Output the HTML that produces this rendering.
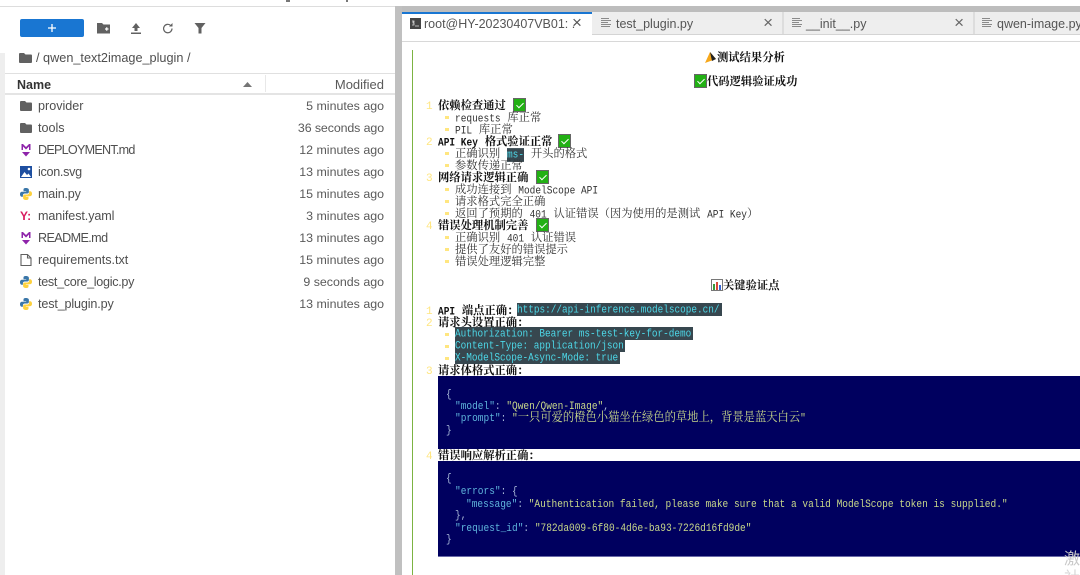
<!DOCTYPE html>
<html><head><meta charset="utf-8">
<style>
html,body{margin:0;padding:0;background:#fff}
#p{position:relative;width:1080px;height:575px;overflow:hidden;background:#fff;font-family:"Liberation Sans","Noto Sans CJK SC",sans-serif;filter:blur(.3px)}
.a{position:absolute}
.f{position:absolute;font-size:12.6px;line-height:22px;height:22px;color:#4f4f4f;white-space:nowrap}
.m{position:absolute;right:696px;font-size:12.4px;line-height:22px;height:22px;color:#5a5a5a;white-space:nowrap}
.ic{position:absolute;left:19px;width:14px;height:14px}
.tab{position:absolute;top:12px;height:22px;background:#eee;border-right:2px solid #ddd;box-sizing:border-box;font-size:12.5px;line-height:20px;color:#555}
.tab span{position:absolute;top:2px;left:31px;white-space:nowrap}
.tab b{position:absolute;right:9px;top:1px;font-weight:normal;font-size:17px;color:#666}
.l{position:absolute;margin-top:4px;height:12px;line-height:12px;font-size:11.3px;white-space:nowrap;font-family:"Liberation Mono","Noto Serif CJK SC",monospace;color:#333}
.l i{font-style:normal;font-size:9.5px;display:inline-block;transform:scaleY(1.15)}
.bd{font-weight:bold;color:#111}
.n{position:absolute;margin-top:4px;left:426px;height:12px;line-height:12px;font-size:11px;color:#ffe680;font-family:"Liberation Mono",monospace}
.d{position:absolute;left:445px;width:4px;height:3px;background:#ffe680}
.hl{background:#37474f;color:#4dd8e8;font-family:"Liberation Mono","Noto Serif CJK SC",monospace}
.hl em{font-style:normal;display:inline-block;transform:scaleY(1.15)}
.c{position:absolute;margin-top:1px;left:446px;height:12px;line-height:12px;font-size:9.5px;white-space:pre;font-family:"Liberation Mono","Noto Serif CJK SC",monospace;color:#a8b8d8;transform:scaleY(1.12)}
.c u{text-decoration:none;color:#5fb4dc}
.c s{text-decoration:none;color:#c8d88a}
.ck{position:absolute;width:13px;height:14px;background:#22b014;border:1px solid #666;box-sizing:border-box}
.ck:after{content:"";position:absolute;left:4px;top:2px;width:3px;height:6px;border:solid #fff;border-width:0 1.5px 1.5px 0;transform:rotate(45deg)}
</style></head><body><div id="p">

<div class="a" style="left:286px;top:0;width:4px;height:2px;background:#777"></div>
<div class="a" style="left:346px;top:0;width:2px;height:2px;background:#777"></div>
<div class="a" style="left:0;top:6px;width:395px;height:1px;background:#ddd"></div>
<div class="a" style="left:0;top:53px;width:5px;height:522px;background:#eee"></div>
<div class="a" style="left:395px;top:6px;width:7px;height:569px;background:#c0c0c0"></div>
<div class="a" style="left:402px;top:6px;width:678px;height:6px;background:#bdbdbd"></div>

<div class="a" style="left:20px;top:19px;width:64px;height:18px;background:#1976d2;border-radius:2px"></div>
<svg class="a" style="left:47px;top:23px" width="10" height="10" viewBox="0 0 10 10"><path d="M5 1v8M1 5h8" stroke="#fff" stroke-width="1.300"/></svg>
<svg class="a" style="left:97px;top:22px" width="14" height="13" viewBox="0 0 14 13"><path d="M0 1h5l1.500 1.500H13v9H0z" fill="#616161"/><path d="M8 7h3.500M9.750 5.250v3.500" stroke="#fff" stroke-width="1.200"/></svg>
<svg class="a" style="left:130px;top:22px" width="12" height="13" viewBox="0 0 12 13"><path d="M6 1l4 5H7.500v3h-3V6H2zM1 10.500h10V12H1z" fill="#616161"/></svg>
<svg class="a" style="left:162px;top:22px" width="12" height="13" viewBox="0 0 12 13"><path d="M10 6.500a4.200 4.200 0 1 1-1.300-3" fill="none" stroke="#616161" stroke-width="1.200"/><path d="M10.500 1v3.500H7z" fill="#616161"/></svg>
<svg class="a" style="left:194px;top:22px" width="12" height="12" viewBox="0 0 12 12"><path d="M.5 1h11L7.500 6v5.500h-3V6z" fill="#616161"/></svg>

<svg class="a" style="left:19px;top:52px" width="13" height="12" viewBox="0 0 13 12"><path d="M0 2a1 1 0 0 1 1-1h4l1.500 1.500H12a1 1 0 0 1 1 1V10a1 1 0 0 1-1 1H1a1 1 0 0 1-1-1z" fill="#616161"/></svg>
<div class="a" style="left:36px;top:48px;font-size:12.7px;line-height:20px;color:#4f4f4f;white-space:nowrap">/ qwen_text2image_plugin /</div>
<div class="a" style="left:5px;top:73px;width:390px;height:1px;background:#e0e0e0"></div>
<div class="a" style="left:17px;top:76px;font-size:12.500px;line-height:18px;font-weight:bold;color:#333">Name</div>
<svg class="a" style="left:243px;top:82px" width="9" height="5" viewBox="0 0 9 5"><path d="M0 5L4.500 0 9 5z" fill="#757575"/></svg>
<div class="a" style="left:265px;top:75px;width:1px;height:17px;background:#e8e8e8"></div>
<div class="a" style="right:696px;top:76px;font-size:13px;line-height:18px;color:#5a5a5a">Modified</div>
<div class="a" style="left:5px;top:93px;width:390px;height:2px;background:#e4e4e4"></div>

<svg class="ic" style="top:99px" viewBox="0 0 14 14"><path d="M1 3a1 1 0 0 1 1-1h4l1.500 1.500H12a1 1 0 0 1 1 1V11a1 1 0 0 1-1 1H2a1 1 0 0 1-1-1z" fill="#616161"/></svg>
<div class="f" style="left:38px;top:95px">provider</div><div class="m" style="top:95px">5 minutes ago</div>
<svg class="ic" style="top:121px" viewBox="0 0 14 14"><path d="M1 3a1 1 0 0 1 1-1h4l1.500 1.500H12a1 1 0 0 1 1 1V11a1 1 0 0 1-1 1H2a1 1 0 0 1-1-1z" fill="#616161"/></svg>
<div class="f" style="left:38px;top:117px">tools</div><div class="m" style="top:117px;letter-spacing:-.1px">36 seconds ago</div>
<svg class="ic" style="top:143px" viewBox="0 0 14 14"><path d="M2.500 7V1h1.500L7 4l3-3h1.500v6H10V3.500L7 6.500 4 3.500V7zM3 9h8l-4 4.500z" fill="#8e24aa"/></svg>
<div class="f" style="left:38px;top:139px;letter-spacing:-.75px">DEPLOYMENT.md</div><div class="m" style="top:139px">12 minutes ago</div>
<svg class="ic" style="top:165px" viewBox="0 0 14 14"><rect x="1" y="1" width="12" height="12" fill="#1e4fa0"/><path d="M2 12l3.500-5 2.500 3 1.500-1.500L12 12z" fill="#fff"/><circle cx="10" cy="4" r="1.300" fill="#fff"/></svg>
<div class="f" style="left:38px;top:161px;letter-spacing:-.3px">icon.svg</div><div class="m" style="top:161px">13 minutes ago</div>
<svg class="ic" style="top:187px" viewBox="0 0 14 14"><path d="M7 1C4.500 1 4.500 2 4.500 3v1.200H7.200v.6H3C1.500 4.800 1 6 1 7.200s.6 2.500 1.800 2.500h1.100V8.300c0-1 .9-1.800 1.900-1.800h2.600c.8 0 1.500-.7 1.500-1.500V3C9.900 1.800 8.800 1 7 1z" fill="#3a76a8"/><path d="M7 13c2.500 0 2.500-1 2.500-2V9.800H6.800v-.6H11c1.500 0 2-1.200 2-2.400s-.6-2.500-1.800-2.500h-1.100v1.400c0 1-.9 1.800-1.900 1.800H5.600c-.8 0-1.500.7-1.500 1.500V11c0 1.200 1.100 2 2.900 2z" fill="#fdd13e"/></svg>
<div class="f" style="left:38px;top:183px;letter-spacing:-.2px">main.py</div><div class="m" style="top:183px">15 minutes ago</div>
<div class="a" style="left:20px;top:206px;font-size:12px;line-height:20px;font-weight:bold;color:#d81b60">Y:</div>
<div class="f" style="left:38px;top:205px;letter-spacing:-.1px">manifest.yaml</div><div class="m" style="top:205px">3 minutes ago</div>
<svg class="ic" style="top:231px" viewBox="0 0 14 14"><path d="M2.500 7V1h1.500L7 4l3-3h1.500v6H10V3.500L7 6.500 4 3.500V7zM3 9h8l-4 4.500z" fill="#8e24aa"/></svg>
<div class="f" style="left:38px;top:227px;letter-spacing:-.6px">README.md</div><div class="m" style="top:227px">13 minutes ago</div>
<svg class="ic" style="top:253px" viewBox="0 0 14 14"><path d="M2 1.500h6.500L12 5v7.500H2zM8.500 1.500V5H12" fill="none" stroke="#616161" stroke-width="1.100"/></svg>
<div class="f" style="left:38px;top:249px">requirements.txt</div><div class="m" style="top:249px">15 minutes ago</div>
<svg class="ic" style="top:275px" viewBox="0 0 14 14"><path d="M7 1C4.500 1 4.500 2 4.500 3v1.200H7.200v.6H3C1.500 4.800 1 6 1 7.200s.6 2.500 1.800 2.500h1.100V8.300c0-1 .9-1.800 1.900-1.800h2.600c.8 0 1.500-.7 1.500-1.500V3C9.900 1.800 8.800 1 7 1z" fill="#3a76a8"/><path d="M7 13c2.500 0 2.500-1 2.500-2V9.800H6.800v-.6H11c1.500 0 2-1.200 2-2.400s-.6-2.500-1.800-2.500h-1.100v1.400c0 1-.9 1.800-1.900 1.800H5.600c-.8 0-1.500.7-1.500 1.500V11c0 1.200 1.100 2 2.900 2z" fill="#fdd13e"/></svg>
<div class="f" style="left:38px;top:271px;letter-spacing:-.3px">test_core_logic.py</div><div class="m" style="top:271px">9 seconds ago</div>
<svg class="ic" style="top:297px" viewBox="0 0 14 14"><path d="M7 1C4.500 1 4.500 2 4.500 3v1.200H7.200v.6H3C1.500 4.800 1 6 1 7.200s.6 2.500 1.800 2.500h1.100V8.300c0-1 .9-1.800 1.900-1.800h2.600c.8 0 1.500-.7 1.500-1.500V3C9.900 1.800 8.800 1 7 1z" fill="#3a76a8"/><path d="M7 13c2.500 0 2.500-1 2.500-2V9.800H6.800v-.6H11c1.500 0 2-1.200 2-2.400s-.6-2.500-1.800-2.500h-1.100v1.400c0 1-.9 1.800-1.900 1.800H5.600c-.8 0-1.500.7-1.500 1.500V11c0 1.200 1.100 2 2.900 2z" fill="#fdd13e"/></svg>
<div class="f" style="left:38px;top:293px;letter-spacing:-.15px">test_plugin.py</div><div class="m" style="top:293px">13 minutes ago</div>

<!-- tabs -->
<div class="a" style="left:402px;top:12px;width:190px;height:2px;background:#1976d2"></div>
<div class="a" style="left:402px;top:14px;width:190px;height:27px;background:#fff;font-size:12.5px;line-height:20px;color:#555"><span class="a" style="left:22px;top:0;white-space:nowrap">root@HY-20230407VB01: .</span><b class="a" style="left:170px;top:-1px;font-weight:normal;font-size:17px;color:#555">×</b></div>
<svg class="a" style="left:410px;top:18px" width="11" height="11" viewBox="0 0 11 11"><rect width="11" height="11" fill="#444"/><path d="M2 3h2v1H3v1h1v2H2M5 8h4" stroke="#ddd" stroke-width=".8" fill="none"/></svg>
<div class="tab" style="left:592px;width:192px"><span style="left:24px">test_plugin.py</span><b style="right:9px">×</b></div>
<div class="tab" style="left:784px;width:191px"><span style="left:22px">__init__.py</span><b style="right:9px">×</b></div>
<div class="tab" style="left:975px;width:105px;border:0"><span style="left:22px">qwen-image.py</span></div>
<svg class="a" style="left:601px;top:18px" width="10" height="10" viewBox="0 0 10 10"><path d="M0 .5h8M0 2.500h10M0 4.500h7M0 6.500h10M0 8.500h9" stroke="#8a8a8a" stroke-width="1"/></svg>
<svg class="a" style="left:792px;top:18px" width="10" height="10" viewBox="0 0 10 10"><path d="M0 .5h8M0 2.500h10M0 4.500h7M0 6.500h10M0 8.500h9" stroke="#8a8a8a" stroke-width="1"/></svg>
<svg class="a" style="left:982px;top:18px" width="10" height="10" viewBox="0 0 10 10"><path d="M0 .5h8M0 2.500h10M0 4.500h7M0 6.500h10M0 8.500h9" stroke="#8a8a8a" stroke-width="1"/></svg>
<div class="a" style="left:592px;top:34px;width:488px;height:1px;background:#d4d4d4"></div>
<div class="a" style="left:402px;top:41px;width:678px;height:1px;background:#d8d8d8"></div>
<div class="a" style="left:412px;top:50px;width:1px;height:525px;background:#7cb342"></div>

<!-- headings -->
<svg class="a" style="left:705px;top:50px" width="13" height="13" viewBox="0 0 13 13"><path d="M0 13L5 2l6 7z" fill="#f6a81c"/><path d="M5 2l6 7-4 2z" fill="#222"/></svg>
<div class="l bd" style="left:717px;top:49px">测试结果分析</div>
<div class="ck" style="left:694px;top:74px"></div>
<div class="l bd" style="left:707px;top:73px">代码逻辑验证成功</div>

<div class="n" style="top:97px">1</div><div class="l bd" style="left:438px;top:97px">依赖检查通过</div><div class="ck" style="left:513px;top:98px"></div>
<div class="d" style="top:116px"></div><div class="l" style="left:455px;top:109px"><i>requests</i> 库正常</div>
<div class="d" style="top:128px"></div><div class="l" style="left:455px;top:121px"><i>PIL</i> 库正常</div>
<div class="n" style="top:133px">2</div><div class="l bd" style="left:438px;top:133px"><i>API Key</i> 格式验证正常</div><div class="ck" style="left:558px;top:134px"></div>
<div class="d" style="top:152px"></div><div class="l" style="left:455px;top:145px">正确识别 <i class="hl">ms-</i> 开头的格式</div>
<div class="d" style="top:164px"></div><div class="l" style="left:455px;top:157px">参数传递正常</div>
<div class="n" style="top:169px">3</div><div class="l bd" style="left:438px;top:169px">网络请求逻辑正确</div><div class="ck" style="left:536px;top:170px"></div>
<div class="d" style="top:188px"></div><div class="l" style="left:455px;top:181px">成功连接到 <i>ModelScope API</i></div>
<div class="d" style="top:200px"></div><div class="l" style="left:455px;top:193px">请求格式完全正确</div>
<div class="d" style="top:212px"></div><div class="l" style="left:455px;top:205px">返回了预期的 <i>401</i> 认证错误（因为使用的是测试 <i>API Key</i>）</div>
<div class="n" style="top:217px">4</div><div class="l bd" style="left:438px;top:217px">错误处理机制完善</div><div class="ck" style="left:536px;top:218px"></div>
<div class="d" style="top:236px"></div><div class="l" style="left:455px;top:229px">正确识别 <i>401</i> 认证错误</div>
<div class="d" style="top:248px"></div><div class="l" style="left:455px;top:241px">提供了友好的错误提示</div>
<div class="d" style="top:260px"></div><div class="l" style="left:455px;top:253px">错误处理逻辑完整</div>

<svg class="a" style="left:711px;top:279px" width="12" height="12" viewBox="0 0 12 12"><rect x=".5" y=".5" width="11" height="11" fill="#fff" stroke="#777"/><rect x="2" y="5" width="2" height="6" fill="#3a9a3a"/><rect x="5" y="3" width="2" height="8" fill="#d84a3a"/><rect x="8" y="6" width="2" height="5" fill="#3a6ad8"/></svg>
<div class="l bd" style="left:723px;top:277px">关键验证点</div>

<div class="n" style="top:302px">1</div><div class="l bd" style="left:438px;top:302px"><i>API</i> 端点正确：</div>
<div class="a hl" style="left:517px;top:303px;height:13px;line-height:13px;font-size:9.400px;white-space:nowrap;width:205px"><em>https://api-inference.modelscope.cn/</em></div>
<div class="n" style="top:314px">2</div><div class="l bd" style="left:438px;top:314px">请求头设置正确：</div>
<div class="d" style="top:333px"></div><div class="a hl" style="left:455px;top:327px;height:13px;line-height:13px;font-size:9.400px;white-space:nowrap;width:238px"><em>Authorization: Bearer ms-test-key-for-demo</em></div>
<div class="d" style="top:345px"></div><div class="a hl" style="left:455px;top:340px;height:12px;line-height:12px;font-size:9.400px;white-space:nowrap;width:170px"><em>Content-Type: application/json</em></div>
<div class="d" style="top:357px"></div><div class="a hl" style="left:455px;top:352px;height:12px;line-height:12px;font-size:9.400px;white-space:nowrap;width:165px"><em>X-ModelScope-Async-Mode: true</em></div>
<div class="n" style="top:362px">3</div><div class="l bd" style="left:438px;top:362px">请求体格式正确：</div>

<div class="a" style="left:438px;top:376px;width:642px;height:73px;background:#00005f"></div>
<div class="c" style="top:388px">{</div>
<div class="c" style="left:455px;top:400px"><u>"model"</u>: <s>"Qwen/Qwen-Image"</s>,</div>
<div class="c" style="left:455px;top:412px"><u>"prompt"</u>: <s>"<span style="font-size:11.300px">一只可爱的橙色小猫坐在绿色的草地上，背景是蓝天白云</span>"</s></div>
<div class="c" style="top:424px">}</div>

<div class="n" style="top:447px">4</div><div class="l bd" style="left:438px;top:447px">错误响应解析正确：</div>

<div class="a" style="left:438px;top:461px;width:642px;height:96px;background:#00005f;border-bottom:1px solid #6a6aa8;box-sizing:border-box"></div>
<div class="c" style="top:472px">{</div>
<div class="c" style="left:455px;top:485px"><u>"errors"</u>: {</div>
<div class="c" style="left:466px;top:498px"><u>"message"</u>: <s>"Authentication failed, please make sure that a valid ModelScope token is supplied."</s></div>
<div class="c" style="left:455px;top:509px">},</div>
<div class="c" style="left:455px;top:522px"><u>"request_id"</u>: <s>"782da009-6f80-4d6e-ba93-7226d16fd9de"</s></div>
<div class="c" style="top:533px">}</div>

<div class="a" style="left:1064px;top:551px;font-size:16px;line-height:18px;color:#c8c8c8">激</div>
<div class="a" style="left:1064px;top:570px;font-size:16px;line-height:18px;color:#d8d8d8">社</div>
</div></body></html>
